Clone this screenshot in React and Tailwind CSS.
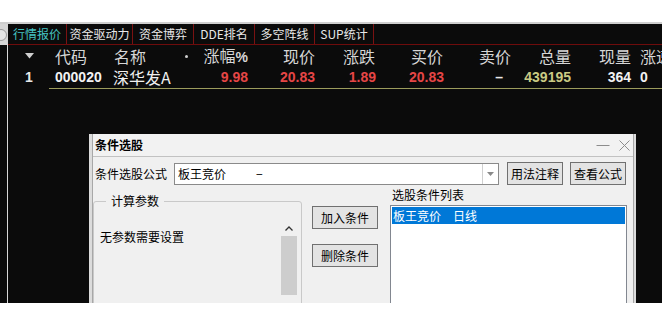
const cjk = { fontFamily: '"Noto Sans CJK SC", "Liberation Sans", sans-serif' };
const num = { fontFamily: '"Liberation Sans", Arial, sans-serif' };

const tabs = [
  { label: "行情报价", w: "w-[59px]", active: true },
  { label: "资金驱动力", w: "w-[66px]" },
  { label: "资金博弈", w: "w-[61px]" },
  { label: "DDE排名", w: "w-[61px]" },
  { label: "多空阵线", w: "w-[60px]" },
  { label: "SUP统计", w: "w-[59px]" },
];

function Tabs() {
  return (
    <div className="flex h-[21px] border-b border-[#6e0c0c] text-[12px] leading-[20px]" style={cjk}>
      {tabs.map((t) => (
        <div
          key={t.label}
          className={`${t.w} shrink-0 border-r border-[#7a1212] text-center ${t.active ? "text-[#45c3c3]" : "text-[#e8e8e8]"}`}
        >
          {t.label}
        </div>
      ))}
    </div>
  );
}

function HeaderRow() {
  return (
    <div className="flex h-[22px] items-center text-[16px] leading-[22px] text-[#d6d6d6]" style={cjk}>
      <div className="w-[41px] shrink-0 pl-[17px] flex items-center">
        <svg width="9" height="6" viewBox="0 0 9 6">
          <path d="M0 0 L9 0 L4.5 5.5 Z" fill="#cfcfcf" />
        </svg>
      </div>
      <div className="w-[57px] shrink-0 pl-[6px]">代码</div>
      <div className="w-[86px] shrink-0 pl-[8px] pr-[4px] flex justify-between items-center">
        <span>名称</span>
        <span className="w-[3px] h-[3px] rounded-full bg-[#cfcfcf]" />
      </div>
      <div className="w-[56px] shrink-0 text-right">涨幅<span style={num} className="font-bold text-[14px]">%</span></div>
      <div className="w-[67px] shrink-0 text-right">现价</div>
      <div className="w-[60px] shrink-0 text-right">涨跌</div>
      <div className="w-[68px] shrink-0 text-right">买价</div>
      <div className="w-[68px] shrink-0 text-right">卖价</div>
      <div className="w-[60px] shrink-0 text-right">总量</div>
      <div className="w-[60px] shrink-0 text-right">现量</div>
      <div className="shrink-0 pl-[9px] whitespace-nowrap">涨速</div>
    </div>
  );
}

function DataRow() {
  return (
    <div className="flex h-[21px] items-center text-[14px] font-bold leading-[21px]" style={num}>
      <div className="w-[41px] shrink-0 pl-[17px] text-[#e8e8e8]">1</div>
      <div className="w-[57px] shrink-0 pl-[6px] text-[#f2f2f2]">000020</div>
      <div className="w-[86px] shrink-0 pl-[7px] text-[16px] font-normal text-[#f0f0f0]" style={cjk}>深华发A</div>
      <div className="w-[56px] shrink-0 text-right text-[#e64646]">9.98</div>
      <div className="w-[67px] shrink-0 text-right text-[#e64646]">20.83</div>
      <div className="w-[61px] shrink-0 text-right text-[#e64646]">1.89</div>
      <div className="w-[68px] shrink-0 text-right text-[#e64646]">20.83</div>
      <div className="w-[67px] shrink-0 text-right pr-[8px] text-[#e8e8e8]">–</div>
      <div className="w-[60px] shrink-0 text-right text-[#caca84]">439195</div>
      <div className="w-[60px] shrink-0 text-right text-[#f2f2f2]">364</div>
      <div className="shrink-0 pl-[9px] text-[#f2f2f2]">0</div>
    </div>
  );
}

function Button({ children, className = "" }) {
  return (
    <div
      className={`h-[23px] border border-[#707070] bg-[#e3e3e3] text-[12px] leading-[21px] text-center text-black ${className}`}
    >
      {children}
    </div>
  );
}

function Dialog() {
  return (
    <div
      className="absolute left-[89px] top-[134px] w-[547px] h-[169px] overflow-hidden bg-[#f0f0f0] border-l-[3px] border-r-[2px] border-[#dcdcdc] text-black"
      style={cjk}
    >
      <div className="h-full border-l border-r border-[#a8a8a8]">
        {/* title bar */}
        <div className="h-[23px] border-b border-[#c2c2c2] flex items-center justify-between pl-[2px] pr-[3px] bg-[#f2f2f2]">
          <span className="text-[12px] font-bold leading-[14px]">条件选股</span>
          <div className="flex items-center gap-[9px]">
            <svg width="14" height="12" viewBox="0 0 14 12">
              <path d="M0.5 6.5 H13.5" stroke="#8c8c8c" strokeWidth="1" />
            </svg>
            <svg width="11" height="11" viewBox="0 0 11 11">
              <path d="M0.5 0.5 L10.5 10.5 M10.5 0.5 L0.5 10.5" stroke="#8c8c8c" strokeWidth="1" />
            </svg>
          </div>
        </div>

        {/* formula row */}
        <div className="flex items-center mt-[5px] pl-[2px] text-[12px] leading-[14px]">
          <span className="w-[79px] shrink-0">条件选股公式</span>
          <div className="w-[325px] h-[22px] shrink-0 border border-[#8a8a8a] bg-white flex">
            <div className="flex-1 flex items-center pl-[3px]">
              <span>板王竞价</span>
              <span className="ml-[30px]">−</span>
            </div>
            <div className="w-[16px] border-l border-[#d0d0d0] flex items-center justify-center">
              <svg width="7" height="4" viewBox="0 0 7 4">
                <path d="M0 0 H7 L3.5 4 Z" fill="#8a8a8a" />
              </svg>
            </div>
          </div>
          <Button className="w-[56px] ml-[8px]">用法注释</Button>
          <Button className="w-[56px] ml-[7px]">查看公式</Button>
        </div>

        {/* lower section */}
        <div className="flex items-start mt-[3px] text-[12px] leading-[14px]">
          <fieldset className="mt-[6px] ml-[0px] w-[209px] h-[120px] shrink-0 border border-[#c9c9c9] rounded-[3px] pl-[6px] pr-[4px]">
            <legend className="ml-[6px] px-[5px]">计算参数</legend>
            <div className="flex justify-between">
              <span className="mt-[21px] leading-[16px]">无参数需要设置</span>
              <div className="w-[16px] mt-[12px] flex flex-col">
                <div className="h-[16px] flex items-center justify-center">
                  <svg width="8" height="5" viewBox="0 0 8 5">
                    <path d="M0.5 4.5 L4 1 L7.5 4.5" stroke="#333" strokeWidth="1.3" fill="none" />
                  </svg>
                </div>
                <div className="h-[59px] bg-[#cdcdcd]" />
              </div>
            </div>
          </fieldset>

          <div className="ml-[10px] mt-[18px] w-[66px] shrink-0 flex flex-col gap-[15px]">
            <Button>加入条件</Button>
            <Button>删除条件</Button>
          </div>

          <div className="ml-[12px] w-[237px] shrink-0 flex flex-col">
            <span className="pl-[2px]">选股条件列表</span>
            <div className="mt-[3px] h-[120px] border border-[#828790] bg-white p-[1px]">
              <div className="h-[17px] bg-[#0078d7] text-white flex items-center pl-[1px]">
                <span>板王竞价</span>
                <span className="ml-[12px]">日线</span>
              </div>
            </div>
          </div>
        </div>
      </div>
    </div>
  );
}

export default function App() {
  return (
    <div className="relative w-[662px] h-[327px] bg-white overflow-hidden">
      <div className="h-[22px] bg-white" />
      <div className="h-[2px] bg-[#cfcfcf]" />
      <div className="h-[279px] bg-[#0b0b0b] flex">
        <div className="w-[8px] shrink-0 flex flex-col">
          <div className="h-[21px] bg-[#d6d6d6] flex items-center">
            <div className="w-[12px] h-[12px] -ml-[5px] rounded-full border border-[#9a9a9a] bg-[#e6e6e6]" />
          </div>
          <div className="flex-1 border-r border-[#d8d8d8]" />
        </div>
        <div className="flex-1 min-w-0 flex flex-col overflow-hidden">
          <Tabs />
          <HeaderRow />
          <DataRow />
          <div className="ml-[41px] h-px bg-[#9c9c5c]" />
        </div>
      </div>
      <Dialog />
    </div>
  );
}
